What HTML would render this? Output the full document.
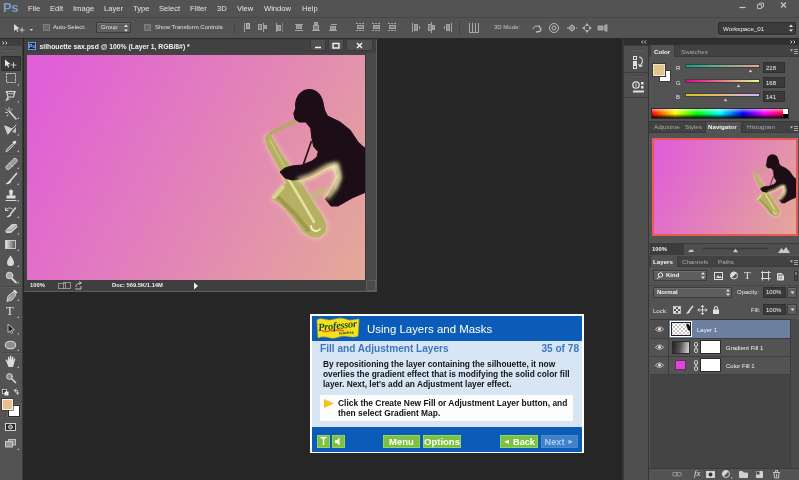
<!DOCTYPE html>
<html><head><meta charset="utf-8">
<style>
*{box-sizing:border-box;margin:0;padding:0}
html,body{width:799px;height:480px;overflow:hidden;background:#262626;font-family:"Liberation Sans",sans-serif;}
body{position:relative;will-change:transform}
.abs,.abs-c>*{position:absolute}
svg{position:absolute;overflow:visible}
#menubar{left:0;top:0;width:799px;height:17px;background:#535353;color:#e4e4e4;font-size:7.6px;}
#menubar span{position:absolute;top:4px;white-space:nowrap}
#optbar{left:0;top:17px;width:799px;height:22px;background:#535353;border-top:1px solid #484848;border-bottom:1px solid #2a2a2a;color:#e0e0e0;font-size:6px}
#optbar span{position:absolute;white-space:nowrap}
#tools{left:0;top:39px;width:23px;height:441px;background:#535353;border-right:1px solid #3c3c3c}
#doc{left:24px;top:39px;width:353px;height:253px;background:#434343;border:1px solid #3e3e3e;border-right-color:#5c5c5c;border-bottom-color:#5c5c5c}
#doctitle{left:0;top:0;width:351px;height:13px;background:#414141;color:#f2f2f2;font-size:6.800px;font-weight:bold;white-space:nowrap}
#canvas{left:2px;top:15px;width:338px;height:225px;overflow:hidden;background:#e27ccc}
#rdock{left:649px;top:39px;width:150px;height:441px;background:#535353;color:#e0e0e0;font-size:6px}
#rdock span{position:absolute;white-space:nowrap}
#iconcol{left:622px;top:39px;width:27px;height:441px;background:#505050;border-left:2px solid #363636;border-right:1px solid #363636}
#tut{left:310px;top:314px;width:274px;height:139px;background:#d7e5f4;border:2px solid #fff;border-bottom-width:1px;font-weight:bold;color:#1a1a1a}
#tut span{position:absolute;white-space:nowrap}
.btn{position:absolute;background:#7cc242;color:#fff;font-size:9.5px;font-weight:bold;text-align:center;line-height:11px;height:12.500px;top:119px;border:1px solid #97d45e}
.tabbar{position:absolute;left:0;width:150px;height:11px;background:#424242;border-bottom:1px solid #3a3a3a}
.tab{position:absolute;top:0;height:11px;background:#535353;border-left:1px solid #3a3a3a;border-right:1px solid #3a3a3a}
.dd{position:absolute;background:#5e5e5e;border:1px solid #3b3b3b;border-radius:1px;box-shadow:inset 0 1px 0 #6e6e6e}
.vb{position:absolute;background:#3a3a3a;border:1px solid #2f2f2f}
</style></head><body>
<!-- MENU BAR -->
<div id="menubar" class="abs">
<span style="left:3px;top:0;font-size:13px;font-weight:bold;color:#7b9fcc;letter-spacing:-0.3px">Ps</span>
<span style="left:28px">File</span><span style="left:50px">Edit</span><span style="left:73px">Image</span><span style="left:104px">Layer</span><span style="left:133px">Type</span><span style="left:159px">Select</span><span style="left:190px">Filter</span><span style="left:217px">3D</span><span style="left:237px">View</span><span style="left:264px">Window</span><span style="left:302px">Help</span>
<svg style="left:735px;top:0" width="64" height="17"><path d="M4.5 7.5h6" stroke="#c8c8c8" stroke-width="1.2"/><path d="M22.5 4.5h4v4h-4zM24.5 4.5v-1.5h4v4h-1.8" fill="none" stroke="#b8b8b8" stroke-width="1"/><path d="M46 2.5l5 5M51 2.5l-5 5" stroke="#c4c4c4" stroke-width="1.3"/></svg>
</div>
<!-- OPTIONS BAR -->
<div id="optbar" class="abs">
<svg style="left:12px;top:5px" width="24" height="12"><path d="M2 1l0 7 2-1.6 1.5 2.6 1-.5-1.4-2.6 2.5-.3z" fill="#d8d8d8"/><path d="M10 4.5v5M7.5 7h5" stroke="#d0d0d0" stroke-width="0.9"/><path d="M17.5 6l1.8 2 1.8-2z" fill="#cfcfcf"/></svg>
<div class="abs" style="left:43px;top:6px;width:7px;height:7px;background:#6a6a6a;border:1px solid #7d7d7d"></div>
<span style="left:53px;top:6px">Auto-Select:</span>
<div class="dd" style="left:96px;top:4px;width:35px;height:11px"></div>
<span style="left:101px;top:6px">Group</span>
<svg style="left:123px;top:6px" width="6" height="9"><path d="M1 3l2-2.4 2 2.4zM1 5.4l2 2.4 2-2.4z" fill="#e0e0e0"/></svg>
<div class="abs" style="left:144px;top:6px;width:7px;height:7px;background:#6a6a6a;border:1px solid #7d7d7d"></div>
<span style="left:155px;top:6px">Show Transform Controls</span>
<div class="abs" style="left:234px;top:4px;width:1px;height:12px;background:#444"></div>
<svg style="left:240px;top:2px" width="400" height="16" fill="none" stroke="#a4a4a4" stroke-width="1">
<g id="al"><path d="M4.5 3v9"/><rect x="6.500" y="3.500" width="3" height="5" fill="#8e8e8e" stroke="#b4b4b4"/></g>
<g transform="translate(15,0)"><path d="M8.500 3v9"/><rect x="3.500" y="4.500" width="3" height="5" fill="#7a7a7a"/><rect x="9.500" y="5.500" width="2" height="3" fill="#8e8e8e"/></g>
<g transform="translate(32,0)"><path d="M4.500 3v9"/><rect x="5.500" y="5.500" width="3" height="5" fill="#8e8e8e"/><path d="M10.500 3v9" stroke="#808080"/></g>
<g transform="translate(52,0)"><path d="M3 4.500h8M3 10.500h8" /><rect x="4.500" y="5.500" width="5" height="3" fill="#8e8e8e"/></g>
<g transform="translate(69,0)"><path d="M3 10.500h8"/><rect x="4.500" y="5.500" width="5" height="4" fill="#7a7a7a"/><rect x="5.500" y="2.500" width="3" height="2" fill="#8e8e8e"/></g>
<g transform="translate(86,0)"><path d="M3 10.500h8M5 4.500h6"/><rect x="4.500" y="6.500" width="5" height="3" fill="#8e8e8e"/></g>
<g transform="translate(113,0)"><path d="M3 3.500h9M3 10.500h9" stroke-dasharray="2 1"/><rect x="4.500" y="5.500" width="6" height="3" fill="#7a7a7a"/></g>
<g transform="translate(129,0)"><path d="M3 3.500h9M3 10.500h9" stroke-dasharray="2 1"/><rect x="4.500" y="5.500" width="6" height="3" fill="#8a8a8a"/></g>
<g transform="translate(145,0)"><path d="M3 3.500h9M3 10.500h9" stroke-dasharray="2 1"/><rect x="4.500" y="5.500" width="6" height="3" fill="#7a7a7a"/></g>
<g transform="translate(169,0)"><path d="M3.500 3v9"/><rect x="5.500" y="4.500" width="3" height="6" fill="#8e8e8e"/><path d="M10.500 6v3"/></g>
<g transform="translate(184,0)"><path d="M7.500 2v11"/><rect x="4.500" y="4.500" width="3" height="6" fill="#7a7a7a"/><rect x="8.500" y="5.500" width="2" height="4" fill="#8e8e8e"/></g>
<g transform="translate(201,0)"><path d="M10.500 3v9"/><rect x="5.500" y="4.500" width="3" height="6" fill="#8e8e8e"/><path d="M3.500 6v3"/></g>
<g transform="translate(226,0)"><path d="M3.500 3v10M6.500 3v10M9.500 3v10M12.500 3v10" stroke="#a8a8a8"/><path d="M3 12.500h10"/></g>
</svg>
<div class="abs" style="left:459px;top:4px;width:1px;height:12px;background:#444"></div>
<span style="left:494px;top:6px;color:#c4c4c4">3D Mode:</span>
<svg style="left:530px;top:3px" width="90" height="14" fill="none" stroke="#bdbdbd" stroke-width="1">
<path d="M3 8a4 3 0 1 1 3 3M9 4l2 6-5 1" /><circle cx="24" cy="7" r="4.500"/><circle cx="24" cy="7" r="2"/>
<path d="M37 7h10M42 3.500v7" stroke-dasharray="2 1"/><circle cx="42" cy="7" r="2.500"/>
<path d="M57 2l2 3h-4zM57 12l2-3h-4zM52 7l3-2v4zM62 7l-3-2v4z" fill="#b5b5b5" stroke="none"/>
<path d="M68 5h5v4h-5zM74 5l3-1.500v7l-3-1.500" fill="#9a9a9a" stroke="#bdbdbd" stroke-width=".7"/>
</svg>
<div class="abs" style="left:718px;top:4px;width:78px;height:13px;background:#3b3b3b;border:1px solid #2b2b2b;border-radius:2px;box-shadow:0 1px 0 #666"></div>
<span style="left:723px;top:7px;color:#ececec;font-size:6.2px">Workspace_01</span>
<svg style="left:788px;top:6px" width="6" height="9"><path d="M1 3l2-2.400 2 2.400zM1 5.400l2 2.400 2-2.400z" fill="#e0e0e0"/></svg>
</div>
<!-- TOOLS -->
<div id="tools" class="abs">
<div class="abs" style="left:0;top:0;width:23px;height:7px;background:#3f3f3f"></div>
<svg style="left:2px;top:2px" width="8" height="5"><path d="M.5.500l1.500 1.500-1.500 1.500M3.500.500l1.500 1.500-1.500 1.500" fill="none" stroke="#d8d8d8" stroke-width=".9"/></svg>
<div class="abs" style="left:5px;top:10px;width:12px;height:2px;border-top:1px dotted #3a3a3a;border-bottom:1px dotted #6a6a6a"></div>
<div class="abs" style="left:1px;top:17px;width:20px;height:15px;background:#3a3a3a;border:1px solid #2e2e2e;border-radius:1px"></div>
<svg style="left:0;top:0" width="23" height="441" fill="none" stroke="#d6d6d6" stroke-width="1" stroke-linecap="round">
<path d="M2 115.500h19M2 247.500h19M2 313.500h19" stroke="#474747" stroke-width="1"/><path d="M2 116.500h19M2 248.500h19M2 314.500h19" stroke="#5c5c5c" stroke-width="1"/>
<!-- move y=24 -->
<path d="M5 20.500v7l1.800-1.500 1.400 2.500 1.100-.6-1.300-2.500 2.400-.3z" fill="#e6e6e6" stroke="none"/><path d="M13.500 23.500v5M11 26h5" stroke-width=".9" stroke="#d0d0d0"/>
<!-- marquee y=41 -->
<rect x="6.500" y="34.500" width="9" height="9" stroke-dasharray="2 1.500" stroke="#c8c8c8" stroke-width=".9"/>
<!-- lasso y=58 -->
<path d="M6.500 52.500h8.500l-1.500 5.500h-5.500zM8 58l-1.500 3 2.500-1" stroke="#d8d8d8" stroke-width="1.200"/><ellipse cx="11" cy="53.500" rx="3.500" ry="1.300" stroke-width=".8"/>
<!-- wand y=74 -->
<path d="M9 72l7 8" stroke-width="1.600"/><path d="M6 70l1.500 1.500M9 68.500v2M12 70l-1 1.200M5.500 73.500h2M7 77l1-1.500" stroke-width=".9"/>
<!-- crop y=91 -->
<path d="M5 87l7 3-4 5zM8 94l8-8" fill="#d0d0d0" stroke-width="1"/><path d="M12 93l4-5v6z" fill="#bdbdbd" stroke="none"/>
<!-- eyedropper y=107 -->
<path d="M6 112.500l1-2.500 5-5 1.500 1.500-5 5z" fill="#8a8a8a" stroke-width=".8"/><path d="M12 103.500l3-2 1.500 1.500-2 3z" fill="#e0e0e0" stroke="none"/>
<!-- heal y=124 -->
<path d="M6.500 127l7-7a2 2 0 0 1 3 3l-7 7a2 2 0 0 1-3-3z" fill="#9a9a9a" stroke-width=".9"/><path d="M9 124l4 4" stroke-dasharray="1 1" stroke-width=".8"/>
<!-- brush y=140 -->
<path d="M16.500 134.500l-6 7" stroke-width="1.700"/><path d="M10 141c-1 .5-2 2.500-4.500 4 2.500.5 5-.5 6-2.500z" fill="#e0e0e0" stroke="none"/>
<!-- stamp y=157 -->
<path d="M9 152.500a2 2 0 1 1 4 0l-.8 4h3.300v3h-9v-3h3.300z" fill="#dadada" stroke="none"/><path d="M6 161.500h10" stroke-width="1.200"/>
<!-- history brush y=173 -->
<path d="M15.500 169l-5 6" stroke-width="1.600"/><path d="M10.500 175c-1 .5-2 2-4.500 3 2.500.5 4.500-.3 5.500-2z" fill="#e0e0e0" stroke="none"/><path d="M5.500 171.500a4 3 0 0 1 7-1.500M5.500 169v2.500h2.500" stroke-width=".9"/>
<!-- eraser y=190 -->
<path d="M6 191l6-5.500h4.500l.5 2.500-6 5.500h-4.500z" fill="#c9c9c9" stroke="#e2e2e2" stroke-width=".8"/><path d="M6.200 191l4.800.2 5.800-5.200" stroke="#777" stroke-width=".7"/>
<!-- gradient y=206 -->
<defs><linearGradient id="tg" x1="0" x2="1"><stop offset="0" stop-color="#e8e8e8"/><stop offset="1" stop-color="#555"/></linearGradient></defs>
<rect x="5.500" y="201.500" width="10" height="8" fill="url(#tg)" stroke="#d0d0d0" stroke-width=".9"/>
<!-- blur y=222 -->
<path d="M10.500 216.500c2 3 3.500 5 3.500 7a3.500 3.500 0 0 1-7 0c0-2 1.500-4 3.500-7z" fill="#d8d8d8" stroke="none"/>
<!-- dodge y=238 -->
<circle cx="9.500" cy="236.500" r="3.300" fill="#aaa" stroke-width="1"/><path d="M12 239.500l4 4" stroke-width="1.800"/>
<!-- pen y=256 -->
<path d="M7 262l1-5 5-4 3 3-4 5z" fill="#9a9a9a" stroke-width=".9"/><path d="M7 262l4-4" stroke-width=".8"/><path d="M13 252l1.500-1.500 3 3-1.500 1.500z" fill="#e0e0e0" stroke="none"/>
<!-- path select y=290 -->
<path d="M8 285.500v8l2-1.800 1.400 2.900 1.300-.7-1.400-2.800 2.700-.3z" fill="#1e1e1e" stroke="#d4d4d4" stroke-width=".8"/>
<!-- ellipse y=306 -->
<ellipse cx="10.500" cy="306" rx="5.200" ry="3.800" fill="#8c8c8c" stroke="#d4d4d4" stroke-width="1.100"/>
<!-- hand y=323 -->
<path d="M7 324l-1.500-3 1-.7 1.500 2v-4.300l1.200-.3.500 3.300.3-4.300h1.300l.2 4.300.8-3.600 1.200.3-.4 4 1.200-2.500 1 .5-1.300 4.800-1 3.500h-4.500z" fill="#dcdcdc" stroke="none"/>
<!-- zoom y=339 -->
<circle cx="9.500" cy="337.500" r="2.900" fill="#8a8a8a" stroke-width="1"/><path d="M12 340l3.500 3.500" stroke-width="1.700"/>
<!-- mini -->
<rect x="2.500" y="350.500" width="4" height="4" fill="#222" stroke="#ddd" stroke-width=".8"/><rect x="4.500" y="352.500" width="4" height="4" fill="#eee" stroke="none"/>
<path d="M14 351.500h3.500v3.500M16.200 350l-2.200 1.500 2.200 1.500M16 353.500l1.500 2 1.500-2" stroke-width=".8"/>
<!-- quick mask y=388 -->
<rect x="5.500" y="384.500" width="10" height="7" fill="#2c2c2c" stroke="#d0d0d0" stroke-width="1"/><circle cx="10.500" cy="388" r="2" fill="#777" stroke="#ddd" stroke-width=".8"/>
<!-- screen mode y=405 -->
<rect x="8.500" y="400.500" width="7" height="5.500" fill="#888" stroke="#c8c8c8" stroke-width=".9"/><rect x="5.500" y="402.500" width="7" height="5.500" fill="#999" stroke="#d0d0d0" stroke-width=".9"/>
</svg>
<span class="abs" style="left:6px;top:266px;font-family:'Liberation Serif',serif;font-size:12.500px;color:#e4e4e4;line-height:12px">T</span>
<div class="abs" style="left:8px;top:366px;width:12px;height:12px;background:#fff;border:1px solid #2b2b2b;box-shadow:0 0 0 .5px #777"></div>
<div class="abs" style="left:2px;top:360px;width:11px;height:11px;background:#e8be8f;border:1px solid #f4f4f4;box-shadow:0 0 0 .6px #333"></div>
<svg style="left:0;top:0" width="23" height="441" fill="#b8b8b8"><g id="tri">
<path d="M17 46.500h2v-2zM17 63.500h2v-2zM17 80h2v-2zM17 96.500h2v-2zM17 113h2v-2zM17 130h2v-2zM17 146h2v-2zM17 162.500h2v-2zM17 179h2v-2zM17 195.500h2v-2zM17 212h2v-2zM17 228h2v-2zM17 244.500h2v-2zM17 262h2v-2zM17 279h2v-2zM17 295.500h2v-2zM17 312h2v-2zM17 329h2v-2zM17 411h2v-2z"/></g></svg>
</div>
<!-- DOCUMENT WINDOW -->
<div id="doc" class="abs">
<div id="doctitle" class="abs">
<div class="abs" style="left:3px;top:2px;width:8px;height:8px;background:#0f2a52;border:1px solid #6f9ad0;color:#8fc0f5;font-size:5px;line-height:6px;text-align:center;font-weight:bold">Ps</div>
<span class="abs" style="left:14.500px;top:3px">silhouette sax.psd @ 100% (Layer 1, RGB/8#) *</span>
<div class="abs" style="left:285px;top:0;width:16px;height:11px;background:#505050;border:1px solid #3a3a3a;border-top:0"></div>
<div class="abs" style="left:303px;top:0;width:16px;height:11px;background:#505050;border:1px solid #3a3a3a;border-top:0"></div>
<div class="abs" style="left:321px;top:0;width:27px;height:11px;background:#505050;border:1px solid #3a3a3a;border-top:0"></div>
<svg style="left:285px;top:0" width="66" height="11" fill="none" stroke="#f4f4f4"><path d="M5 7.500h6" stroke-width="1.500"/><rect x="23" y="3.500" width="6" height="4.500" stroke-width="1.400"/><path d="M47 3l5 5M52 3l-5 5" stroke-width="1.400"/></svg>
</div>
<div id="canvas" class="abs">
<svg style="left:0;top:0" width="338" height="225" viewBox="27 55 338 225">
<defs>
<linearGradient id="cg" gradientUnits="userSpaceOnUse" x1="40" y1="70" x2="390" y2="260"><stop offset="0" stop-color="#e05ed8"/><stop offset=".5" stop-color="#e284b7"/><stop offset="1" stop-color="#e4ac95"/></linearGradient>
<filter id="bl1" x="-20%" y="-20%" width="140%" height="140%"><feGaussianBlur stdDeviation="0.6"/></filter>
<filter id="bl2" x="-30%" y="-30%" width="160%" height="160%"><feGaussianBlur stdDeviation="2.200"/></filter>
</defs>
<rect x="26" y="54" width="340" height="227" fill="url(#cg)"/>
<g id="sil">
<!-- sax -->
<path d="M269.500 134L273 140 281 154 289 165 295 174 304 188 313 203 322 216 326 225 325 232 319 237 311 236.500 303 231 292 216 281 204 273 199 283 186 287 183 284 176 276 162 268 147 265.500 138Z" fill="#f0dcae" stroke="#f0dcae" stroke-width="4" filter="url(#bl2)" opacity=".55"/>
<path d="M327 189L303 202" fill="none" stroke="#c2bc7c" stroke-width="6" filter="url(#bl2)" opacity=".9"/>
<g filter="url(#bl1)" stroke-linecap="round" stroke-linejoin="round">
<path d="M296.500 120.500L281 128.500 271 133 267.500 136.500" fill="none" stroke="#b4aa5e" stroke-width="3.200"/>
<path d="M269.500 134L273 140 281 154 289 165 295 174 304 188 313 203 322 216 326 225 325 232 319 237 311 236.500 303 231 292 216 281 204 273 199 283 186 287 183 284 176 276 162 268 147 265.500 138Z" fill="#b6b064" stroke="#b6b064" stroke-width="1"/>
<path d="M274 197L283 187" fill="none" stroke="#d6d48c" stroke-width="4"/>
<path d="M279 198L296 215 308 230" fill="none" stroke="#9a9448" stroke-width="4" opacity=".8"/>
<path d="M288 178L300 198 314 222" fill="none" stroke="#e4e29a" stroke-width="2.500"/>
<path d="M311 226a5 5 0 0 0 9 3" fill="none" stroke="#f0eeb0" stroke-width="2"/>
<path d="M270 140L284 166" fill="none" stroke="#ccc67a" stroke-width="1.500"/>
</g>
<!-- body -->
<g filter="url(#bl1)"><ellipse cx="309.300" cy="105.500" rx="14.300" ry="16.500" fill="#1c0b12"/><path fill="#1c0b12" d="M309 100 318 98 323 103 324.500 110 327.500 116 340 122 350 130 358 142 364 147.500 366 148 366 192 352 198 338 206 331 206 325.500 199 333 188 338 177 335 165 327 167 313 175 302 179 292 180 285 178 280 172 285 168 292 166 302 165 312 161 317 157 318.300 151.700 313.700 146.700 311.700 137 310.800 128.300 305.800 122 299.200 122 295 119 293.800 113.300 296 108Z" stroke="#1c0b12" stroke-width="1" stroke-linejoin="round"/>
<path d="M311.500 141L303.500 164" stroke="#1c0b12" stroke-width="1.600" fill="none"/></g>
<path d="M298 180.500l15-5 14-8.500 9-2 3 12-5 12-8 9" fill="none" stroke="#f2e9a4" stroke-width="5" filter="url(#bl2)" opacity=".95"/>
<path d="M329 168l7-2 2.500 11-4 11" fill="none" stroke="#f6f0c0" stroke-width="3" filter="url(#bl2)" opacity=".9"/>
</g>
</svg>
</div>
<!-- status bar -->
<div class="abs" style="left:2px;top:240px;width:349px;height:10px;background:#3f3f3f;color:#f0f0f0;font-size:5.800px;font-weight:bold">
<span class="abs" style="left:3px;top:2px">100%</span>
<svg style="left:31px;top:1px" width="26" height="10" fill="none" stroke="#9a9a9a" stroke-width=".9"><rect x=".5" y="2.500" width="7" height="5"/><rect x="5.500" y="1.500" width="7" height="6"/><path d="M17 8h6v-3M18 6c0-3 2-4 5-4M21 .500l2.500 1.500-2.500 1.500" stroke="#c8c8c8"/></svg>
<span class="abs" style="left:85px;top:2px">Doc: 569.5K/1.14M</span>
<svg style="left:166px;top:2px" width="6" height="8"><path d="M1 .500l4 3.500-4 3.500z" fill="#f0f0f0"/></svg>
</div>
<div class="abs" style="left:340px;top:13px;width:11px;height:227px;background:#4a4a4a;border-left:1px solid #3a3a3a"></div>
<div class="abs" style="left:341px;top:240px;width:10px;height:11px;background:#4a4a4a;border:1px solid #5e5e5e"></div>
</div>
<!-- ICON COLUMN -->
<div id="iconcol" class="abs">
<div class="abs" style="left:0;top:0;width:27px;height:7px;background:#2f2f2f"></div>
<svg style="left:17px;top:1px" width="8" height="5"><path d="M2 .500l-1.500 1.500 1.500 1.500M5 .500l-1.500 1.500 1.500 1.500" fill="none" stroke="#d8d8d8" stroke-width=".9"/></svg>
<div class="abs" style="left:0;top:6px;width:27px;height:1px;background:#3a3a3a"></div>
<div class="abs" style="left:8px;top:10px;width:11px;height:2px;border-top:1px dotted #3a3a3a;border-bottom:1px dotted #6a6a6a"></div>
<div class="abs" style="left:0;top:33px;width:27px;height:1px;background:#3e3e3e"></div>
<div class="abs" style="left:8px;top:36px;width:11px;height:2px;border-top:1px dotted #3a3a3a;border-bottom:1px dotted #6a6a6a"></div>
<div class="abs" style="left:0;top:58px;width:27px;height:1px;background:#3e3e3e"></div>
<svg style="left:0;top:0" width="27" height="60" fill="none" stroke="#e0e0e0" stroke-width="1">
<rect x="9.500" y="17.500" width="3" height="3"/><rect x="9.500" y="22.500" width="3" height="3" fill="#e0e0e0"/><rect x="9.500" y="26.500" width="3" height="3"/><path d="M15 18c3 0 4 3 3 6l-2 3M14.500 25l1.500 2.500 2.500-1" stroke-width="1.100"/>
<circle cx="12" cy="46" r="3.200" stroke-width="1.300"/><path d="M12 44.500v3" stroke-width="1"/><rect x="17" y="43" width="2.500" height="2.500" fill="#e0e0e0" stroke="none"/><rect x="17" y="47" width="2.500" height="2.500" fill="#e0e0e0" stroke="none"/><path d="M9 52.500h11" stroke-width="2"/>
</svg>
</div>
<!-- RIGHT DOCK -->
<div id="rdock" class="abs">
<div class="abs" style="left:-1px;top:0;width:151px;height:7px;background:#2f2f2f"></div>
<svg style="left:141px;top:1px" width="8" height="5"><path d="M.5.500l1.500 1.500-1.500 1.500M3.500.500l1.500 1.500-1.500 1.500" fill="none" stroke="#d8d8d8" stroke-width=".9"/></svg>
<!-- color panel tabs y=46..57 -->
<div class="tabbar" style="top:6px;height:12px"></div>
<div class="tab" style="left:1px;top:6px;width:25px;height:12px"></div>
<span style="left:5px;top:9px;font-weight:bold;color:#f4f4f4;font-size:6.200px">Color</span>
<span style="left:32px;top:9px;color:#a8a8a8;font-size:6.200px">Swatches</span>
<svg style="left:141px;top:9px" width="8" height="6"><path d="M0 1.500l1.500 2 1.500-2z" fill="#ccc"/><path d="M4 1.500h4M4 3.500h4M4 5.500h4" stroke="#bbb" stroke-width=".8"/></svg>
<!-- swatches -->
<div class="abs" style="left:10px;top:31px;width:12px;height:12px;background:#fff;border:1px solid #3a3a3a"></div>
<div class="abs" style="left:4px;top:25px;width:12px;height:12px;background:#e4c48d;border:1px solid #f0e6cc;box-shadow:0 0 0 1px #3a3a3a"></div>
<span style="left:27px;top:26px;color:#e8e8e8">R</span><span style="left:27px;top:41px;color:#e8e8e8">G</span><span style="left:27px;top:55px;color:#e8e8e8">B</span>
<div class="abs" style="left:36px;top:25px;width:75px;height:4px;border:1px solid #3e3e3e;background:linear-gradient(90deg,#00a88d,#5fb08d 40%,#e4a88d)"></div>
<div class="abs" style="left:36px;top:40px;width:75px;height:4px;border:1px solid #3e3e3e;background:linear-gradient(90deg,#e4008d,#e4608d 40%,#e4ff8d)"></div>
<div class="abs" style="left:36px;top:54px;width:75px;height:4px;border:1px solid #3e3e3e;background:linear-gradient(90deg,#dcc020,#e4b880 50%,#d8b0ff)"></div>
<svg style="left:30px;top:24px" width="90" height="45" fill="#cfcfcf" stroke="#3a3a3a" stroke-width=".6"><path d="M69 9.500l2.500-3.500 2.500 3.500zM57 24.500l2.500-3.500 2.500 3.500zM44 38.500l2.500-3.500 2.500 3.500z"/></svg>
<div class="vb" style="left:114px;top:23px;width:22px;height:11px"></div>
<div class="vb" style="left:114px;top:38px;width:22px;height:11px"></div>
<div class="vb" style="left:114px;top:52px;width:22px;height:11px"></div>
<span style="left:117px;top:26px;color:#f0f0f0">228</span><span style="left:117px;top:41px;color:#f0f0f0">168</span><span style="left:117px;top:55px;color:#f0f0f0">141</span>
<!-- spectrum y=108..118 -->
<div class="abs" style="left:2px;top:69px;width:138px;height:11px;border:1px solid #2d2d2d;background:linear-gradient(180deg,rgba(255,255,255,.55),rgba(255,255,255,0) 45%,rgba(0,0,0,0) 55%,rgba(0,0,0,.9)),linear-gradient(90deg,#f00,#ff0 17%,#0f0 33%,#0ff 50%,#00f 67%,#f0f 83%,#f00)"></div>
<div class="abs" style="left:134px;top:70px;width:5px;height:5px;background:#fff"></div>
<div class="abs" style="left:134px;top:75px;width:5px;height:4px;background:#000"></div>
<!-- navigator tabs y=122..132 -->
<div class="abs" style="left:0;top:82px;width:150px;height:1px;background:#383838"></div>
<div class="tabbar" style="top:83px"></div>
<div class="tab" style="left:56px;top:83px;width:37px"></div>
<span style="left:5px;top:83.700px;color:#ababab;font-size:6.200px">Adjustme</span><span style="left:36px;top:83.700px;color:#ababab;font-size:6.200px">Styles</span>
<span style="left:59px;top:83.700px;font-weight:bold;color:#f4f4f4;font-size:6.200px">Navigator</span><span style="left:98px;top:83.700px;color:#ababab;font-size:6.200px">Histogram</span>
<svg style="left:141px;top:86px" width="8" height="6"><path d="M0 1.500l1.500 2 1.500-2z" fill="#ccc"/><path d="M4 1.500h4M4 3.500h4M4 5.500h4" stroke="#bbb" stroke-width=".8"/></svg>
<!-- nav image 652..797 x 138..236 -->
<div class="abs" style="left:3px;top:99px;width:146px;height:98px;border:2px solid #ee5852;overflow:hidden;background:#e27ccc">
<svg style="left:0;top:0" width="142" height="94" viewBox="27 55 338 225" preserveAspectRatio="none"><rect x="26" y="54" width="340" height="227" fill="url(#cg)"/><use href="#sil"/></svg>
</div>
<!-- zoom row y=243..254 -->
<div class="abs" style="left:0;top:204px;width:150px;height:12px;background:#4e4e4e;border-top:1px solid #3c3c3c"></div>
<div class="abs" style="left:1px;top:205px;width:34px;height:11px;background:#3c3c3c"></div>
<span style="left:3px;top:207px;color:#f2f2f2;font-weight:bold;font-size:5.800px">100%</span>
<svg style="left:36px;top:205px" width="114" height="11"><path d="M3 8l2-2.500 1 1 1-1.500 2 3z" fill="#c8c8c8"/><path d="M18 4.500h65" stroke="#3a3a3a" stroke-width="1.400"/><path d="M47.500 8.500l3-4 3 4z" fill="#d0d0d0" stroke="#444" stroke-width=".5"/><path d="M93 9l3.500-5 2 2.500 2.500-3.500 4 6z" fill="#c8c8c8"/></svg>
<!-- LAYERS tabs y=256..266 -->
<div class="tabbar" style="top:217px"></div>
<div class="tab" style="left:1px;top:217px;width:28px"></div>
<span style="left:4px;top:218.500px;font-weight:bold;color:#f4f4f4;font-size:6.200px">Layers</span>
<span style="left:33px;top:218.500px;color:#ababab;font-size:6.200px">Channels</span><span style="left:69px;top:218.500px;color:#ababab;font-size:6.200px">Paths</span>
<svg style="left:141px;top:220px" width="8" height="6"><path d="M0 1.500l1.500 2 1.500-2z" fill="#ccc"/><path d="M4 1.500h4M4 3.500h4M4 5.500h4" stroke="#bbb" stroke-width=".8"/></svg>
<!-- kind row y=270..280 -->
<div class="dd" style="left:4px;top:231px;width:54px;height:11px"></div>
<svg style="left:7px;top:233px" width="8" height="8" fill="none" stroke="#e8e8e8" stroke-width="1"><circle cx="4.500" cy="3" r="2.200"/><path d="M3 4.800l-2 2.200"/></svg>
<span style="left:17px;top:233px;color:#f0f0f0;font-weight:bold;font-size:6px">Kind</span>
<svg style="left:51px;top:232px" width="6" height="9"><path d="M1 3.500l2-2.400 2 2.400zM1 5.500l2 2.400 2-2.400z" fill="#e0e0e0"/></svg>
<svg style="left:62px;top:230px" width="88" height="14" fill="none" stroke="#dcdcdc" stroke-width="1">
<rect x="3.500" y="3.500" width="8" height="7"/><path d="M5 9l2-3 1.500 2 1-1 1.500 2z" fill="#dcdcdc" stroke="none"/>
<circle cx="23" cy="6.500" r="3.500"/><path d="M20.500 9a3.500 3.500 0 0 1 5-5z" fill="#dcdcdc" stroke="none"/>
<rect x="51.500" y="3.500" width="6" height="6"/><path d="M50 3.500h2M57 3.500h2.500M50 9.500h2M57 9.500h2.500M51.500 2v2M51.500 9v2.500M57.500 2v2M57.500 9v2.500" stroke-width=".9"/>
<path d="M66.500 4.500h4l2 2v4.500h-6zM68.500 7.500h3v3h-3z" fill="#9a9a9a"/>
<rect x="83.500" y="2.500" width="3" height="4" fill="#777" stroke="#3a3a3a"/><rect x="83.500" y="7.500" width="3" height="4" fill="#444" stroke="#3a3a3a"/>
</svg>
<span style="left:95px;top:230px;font-family:'Liberation Serif',serif;font-size:11px;color:#e4e4e4;line-height:12px">T</span>
<!-- blend row y=287..298 -->
<div class="abs" style="left:0;top:246px;width:150px;height:1px;background:#484848"></div>
<div class="dd" style="left:4px;top:248px;width:79px;height:11px"></div>
<span style="left:8px;top:250px;color:#f0f0f0;font-weight:bold;font-size:6px">Normal</span>
<svg style="left:76px;top:249px" width="6" height="9"><path d="M1 3.500l2-2.400 2 2.400zM1 5.500l2 2.400 2-2.400z" fill="#e0e0e0"/></svg>
<span style="left:88px;top:250px;color:#e8e8e8;font-size:6px">Opacity:</span>
<div class="vb" style="left:114px;top:248px;width:23px;height:11px"></div>
<span style="left:117px;top:250px;color:#f0f0f0;font-size:6px">100%</span>
<div class="dd" style="left:138px;top:248px;width:10px;height:11px"></div>
<svg style="left:141px;top:252px" width="5" height="4"><path d="M.5.500l2 2.500 2-2.500z" fill="#e0e0e0"/></svg>
<!-- lock row y=305..315 -->
<span style="left:4px;top:269px;color:#e8e8e8;font-size:6px">Lock:</span>
<svg style="left:22px;top:264px" width="50" height="14" fill="none" stroke="#e0e0e0" stroke-width="1">
<rect x="2.500" y="3.500" width="7" height="7" stroke-width=".8"/><path d="M3 4h2v2h-2zM7 4h2v2h-2zM5 6h2v2h-2zM3 8h2v2h-2zM7 8h2v2h-2z" fill="#e0e0e0" stroke="none"/>
<path d="M22 3l-4 5" stroke-width="1.500"/><path d="M18 7.500c-1 .5-1.500 2-3.500 3 2 .5 4-.3 4.800-1.800z" fill="#e0e0e0" stroke="none"/>
<path d="M31.500 2.500v9M27 7h9M30 4l1.500-1.700 1.500 1.700M30 10l1.500 1.700 1.500-1.700M28.500 5.500l-1.700 1.500 1.700 1.500M34.500 5.500l1.700 1.500-1.700 1.500" stroke-width=".9"/>
<rect x="42" y="6.500" width="6" height="4.500" fill="#e0e0e0" stroke="none"/><path d="M43.500 6.500v-1.500a1.500 1.500 0 0 1 3 0v1.500" stroke-width="1.100"/>
</svg>
<span style="left:102px;top:268px;color:#e8e8e8;font-size:6px">Fill:</span>
<div class="vb" style="left:114px;top:265px;width:23px;height:11px"></div>
<span style="left:117px;top:268px;color:#f0f0f0;font-size:6px">100%</span>
<div class="dd" style="left:138px;top:265px;width:10px;height:11px"></div>
<svg style="left:141px;top:269px" width="5" height="4"><path d="M.5.500l2 2.500 2-2.500z" fill="#e0e0e0"/></svg>
<!-- layer list y=319..468 -->
<div class="abs" style="left:1px;top:280px;width:149px;height:149px;background:#444;border-top:1px solid #383838"></div>
<div class="abs" style="left:141px;top:280px;width:9px;height:149px;background:#4a4a4a;border-left:1px solid #3c3c3c"></div>
<div class="abs" style="left:1px;top:281px;width:140px;height:18px;background:#4e4e4e"></div>
<div class="abs" style="left:19px;top:281px;width:122px;height:18px;background:#6d7f9f"></div>
<div class="abs" style="left:1px;top:299px;width:140px;height:18px;background:#535353;border-top:1px solid #3e3e3e"></div>
<div class="abs" style="left:1px;top:317px;width:140px;height:19px;background:#535353;border-top:1px solid #3e3e3e;border-bottom:1px solid #3e3e3e"></div>
<div class="abs" style="left:19px;top:281px;width:1px;height:54px;background:#3e3e3e"></div>
<svg style="left:4px;top:281px" width="14" height="54" fill="none" stroke="#e4e4e4" stroke-width="1"><g id="eye"><path d="M2.500 9.300c2-3 6-3 8 0-2 2.600-6 2.600-8 0z" fill="#555" stroke-width=".9" stroke="#d8d8d8"/><circle cx="6.500" cy="9.200" r="1.400" fill="#e8e8e8" stroke="none"/></g><use href="#eye" y="18"/><use href="#eye" y="36"/></svg>
<!-- layer 1 thumb 670..691 x 320.500..336.500 -->
<div class="abs" style="left:21px;top:282px;width:22px;height:16px;border:1px solid #fff;outline:1px solid #222;outline-offset:-2px;background-color:#fff;background-image:linear-gradient(45deg,#c8c8c8 25%,transparent 25%,transparent 75%,#c8c8c8 75%),linear-gradient(45deg,#c8c8c8 25%,transparent 25%,transparent 75%,#c8c8c8 75%);background-size:4px 4px;background-position:0 0,2px 2px"></div>
<svg style="left:36px;top:284px" width="6" height="10"><path d="M1 1.500l2-1 2 2.500v5l-2-1-1-3z" fill="#111"/></svg>
<span style="left:48px;top:288px;color:#f4f4f4;font-size:6px">Layer 1</span>
<!-- gradient fill -->
<div class="abs" style="left:23px;top:302px;width:18px;height:13px;border:1px solid #2b2b2b;background:linear-gradient(100deg,#222,#555 45%,#ddd)"></div>
<svg style="left:44px;top:302px" width="6" height="13" fill="none" stroke="#dedede" stroke-width="1"><g id="chain"><rect x="1.500" y="1.500" width="3" height="4" rx="1.200"/><rect x="1.500" y="7.500" width="3" height="4" rx="1.200"/><path d="M3 4.500v4"/></g></svg>
<div class="abs" style="left:51px;top:301px;width:21px;height:14px;background:#fff;border:1px solid #2b2b2b"></div>
<span style="left:77px;top:306px;color:#f4f4f4;font-size:6px">Gradient Fill 1</span>
<!-- color fill -->
<div class="abs" style="left:26px;top:321px;width:11px;height:10px;background:#e046dc;border:1px solid #6a2a68"></div>
<svg style="left:44px;top:320px" width="6" height="13" fill="none" stroke="#dedede" stroke-width="1"><use href="#chain"/></svg>
<div class="abs" style="left:51px;top:319px;width:21px;height:14px;background:#fff;border:1px solid #2b2b2b"></div>
<span style="left:77px;top:324px;color:#f4f4f4;font-size:6px">Color Fill 1</span>
<!-- footer y=468..480 -->
<div class="abs" style="left:0;top:429px;width:150px;height:12px;background:#535353;border-top:1px solid #3a3a3a"></div>
<svg style="left:20px;top:430px" width="120" height="11" fill="none" stroke="#cfcfcf" stroke-width="1">
<rect x="3.500" y="3.500" width="5" height="3.500" rx="1.700" stroke="#9a9a9a"/><rect x="7.500" y="3.500" width="5" height="3.500" rx="1.700" stroke="#9a9a9a"/>
<rect x="37.500" y="2.500" width="8" height="6" fill="#d8d8d8"/><circle cx="41.500" cy="5.500" r="2" fill="#333" stroke="none"/>
<circle cx="57" cy="5" r="3.500"/><path d="M54.500 7.500a3.500 3.500 0 0 1 5-5z" fill="#d8d8d8" stroke="none"/><path d="M62 9h1.500" />
<path d="M70.500 8.500v-6h3l1 1.500h4v4.500z" fill="#d0d0d0"/>
<path d="M87.500 2.500h6v6h-6zM87.500 5.500h3v3" fill="#d0d0d0"/><path d="M87.500 2.500h3v3h-3z" fill="#444" stroke="none"/>
<path d="M104 3.500h7M105 3.500l.5 5.500h4l.5-5.500M106.500 3v-1.500h2v1.500M107.500 5v3" stroke-width=".9"/>
</svg>
<span style="left:45px;top:429px;font-family:'Liberation Serif',serif;font-style:italic;font-size:9px;color:#e0e0e0;line-height:10px">fx</span>
<span style="left:53px;top:433px;font-size:5px;color:#ccc">.</span>
</div>
<!-- TUTORIAL BOX: outer 310..584 x 314..453; inner origin (312,316) -->
<div id="tut" class="abs">
<div class="abs" style="left:0;top:0;width:270px;height:25px;background:#0b5cb8"></div>
<!-- logo 316..359 x 318..338 -->
<svg style="left:4px;top:1px" width="44" height="24"><path d="M1 3c5-3 9 1 14 0s9-3 14-1 8 1 14 0l-1 17c-5 2-9 0-14 0s-8 3-13 2-9-2-13 0z" fill="#f6e21a" stroke="#d9b800" stroke-width=".6"/><path d="M6 14c6 2 14-3 22 0" stroke="#e23a2a" stroke-width="1.600" fill="none" opacity=".7"/></svg>
<span style="left:6px;top:4px;font-family:'Liberation Serif',serif;font-style:italic;font-weight:bold;font-size:10.500px;color:#1d4a2a;letter-spacing:-.3px;transform:rotate(-6deg)">Professor</span>
<span style="left:27px;top:14px;font-family:'Liberation Sans',sans-serif;font-style:italic;font-weight:bold;font-size:4px;color:#1d4a2a;transform:rotate(-4deg)">teaches</span>
<span style="left:55px;top:6.700px;font-size:11.450px;font-weight:normal;color:#fff">Using Layers and Masks</span>
<span style="left:8px;top:26.500px;font-size:10.100px;color:#3c78bf">Fill and Adjustment Layers</span>
<span style="right:3px;top:26.500px;font-size:10.100px;color:#3c78bf">35 of 78</span>
<div class="abs" style="left:11px;top:43px;font-size:8.800px;line-height:10.100px;white-space:nowrap;color:#141414;transform:scaleX(.948);transform-origin:0 0">By repositioning the layer containing the silhouette, it now<br>overlies the gradient effect that is modifying the solid color fill<br>layer. Next, let's add an Adjustment layer effect.</div>
<div class="abs" style="left:8px;top:79px;width:253px;height:26px;background:#fdfdfd"></div>
<svg style="left:11px;top:82px" width="12" height="11"><path d="M1 1l10 4.500-10 4.500z" fill="#f2c21a"/></svg>
<div class="abs" style="left:26px;top:81.500px;font-size:8.800px;line-height:10.300px;white-space:nowrap;color:#111;transform:scaleX(.955);transform-origin:0 0">Click the Create New Fill or Adjustment Layer button, and<br>then select Gradient Map.</div>
<div class="abs" style="left:0;top:111px;width:270px;height:25px;background:#0b5cb8"></div>
<div class="btn" style="left:5px;width:13px;font-family:'Liberation Sans',sans-serif;font-size:10px">T</div>
<div class="btn" style="left:20px;width:13px"></div>
<svg style="left:22px;top:121px" width="9" height="9"><path d="M1 3h2l2.500-2.500v8l-2.500-2.500h-2z" fill="#fff"/></svg>
<div class="btn" style="left:71px;width:37px">Menu</div>
<div class="btn" style="left:111px;width:38px">Options</div>
<div class="btn" style="left:188px;width:38px;font-size:9.200px"><b style="font-size:7.500px;vertical-align:.5px">◄</b> Back</div>
<div class="btn" style="left:229px;width:37px;background:#3f82c8;border-color:#4b8cd0;color:#a9cdef;font-size:9.200px">Next <b style="font-size:7.500px;vertical-align:.5px">►</b></div>
</div>
</body></html>
